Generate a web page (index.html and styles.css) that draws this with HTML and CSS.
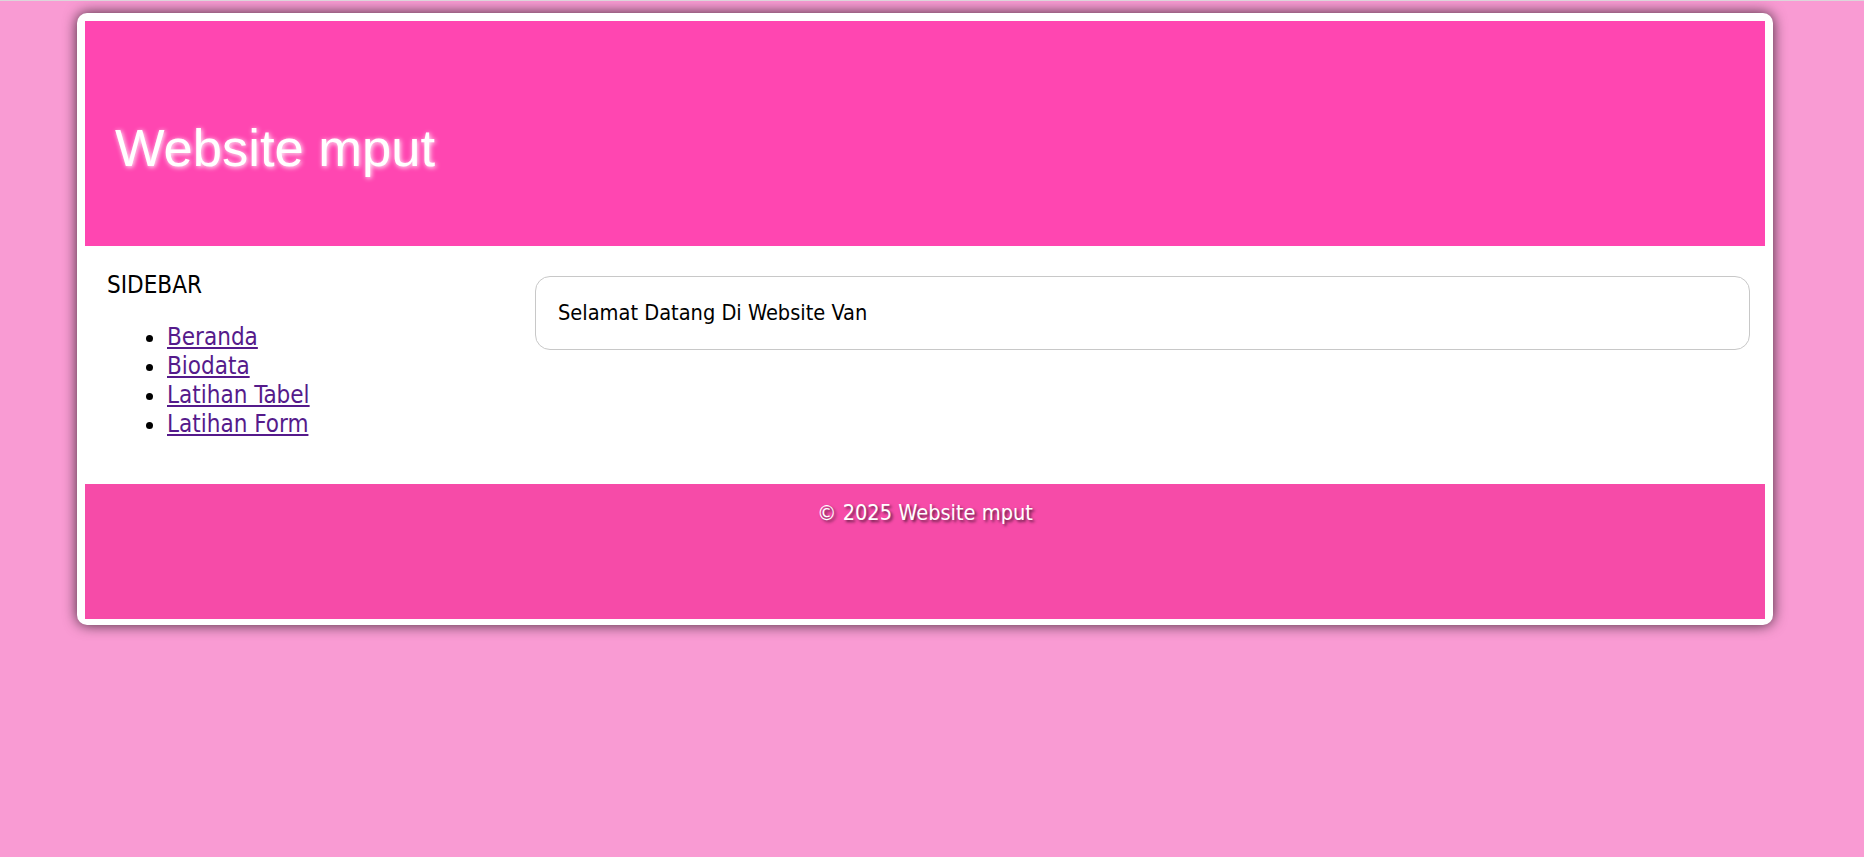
FILE: index.html
```html
<!DOCTYPE html>
<html lang="id">
<head>
<meta charset="utf-8">
<title>Website mput</title>
<link rel="stylesheet" href="styles.css">
</head>
<body>
<div class="page">
  <header class="header">
    <h1>Website mput</h1>
  </header>
  <div class="content">
    <aside class="sidebar">
      <div class="sidebar-title">SIDEBAR</div>
      <ul class="nav">
        <li><a href="#">Beranda</a></li>
        <li><a href="#">Biodata</a></li>
        <li><a href="#">Latihan Tabel</a></li>
        <li><a href="#">Latihan Form</a></li>
      </ul>
    </aside>
    <main class="main">
      <div class="card">Selamat Datang Di Website Van</div>
    </main>
  </div>
  <footer class="footer">© 2025 Website mput</footer>
</div>
</body>
</html>
```

FILE: styles.css
```css
html, body {
  margin: 0;
}
body {
  border-top: 1px solid #dcd6da;
  background: #f99bd3;
  font-family: "DejaVu Sans Condensed", "DejaVu Sans", sans-serif;
  font-size: 21.6px;
  line-height: 28.5px;
  color: #000;
  min-height: 856px;
}
.page {
  margin: 12px 91px 0 77px;
  background: #fff;
  border-radius: 10px;
  padding: 8px 8px 6px;
  box-shadow: 0 0 14px rgba(0, 0, 0, 0.75);
}
.header {
  height: 225px;
  background: #ff46b1;
  padding: 0 30px;
  box-sizing: border-box;
}
.header h1 {
  margin: 0;
  padding-top: 96px;
  font-family: "Liberation Sans", Arial, sans-serif;
  font-size: 52.5px;
  font-weight: normal;
  line-height: normal;
  color: #fff;
  text-shadow: 1px 1px 5px #fff;
}
.content {
  display: flex;
  height: 238px;
}
.sidebar {
  width: 428px;
  padding: 25px 0 0 22px;
  flex-shrink: 0;
  font-size: 24px;
  line-height: 29px;
}
.nav {
  margin: 23px 0 0;
  padding-left: 60px;
}
.nav a {
  color: #551a8b;
}
.main {
  flex: 1;
  padding: 30px 15px 0 0;
}
.card {
  border: 1px solid #c8c8c8;
  border-radius: 15px;
  padding: 22px 22px 21px;
}
.footer {
  height: 135px;
  box-sizing: border-box;
  padding-top: 15px;
  background: #f64ba8;
  color: #fff;
  text-align: center;
  text-shadow: 2px 2px 3px rgba(0, 0, 0, 0.6);
}
```
